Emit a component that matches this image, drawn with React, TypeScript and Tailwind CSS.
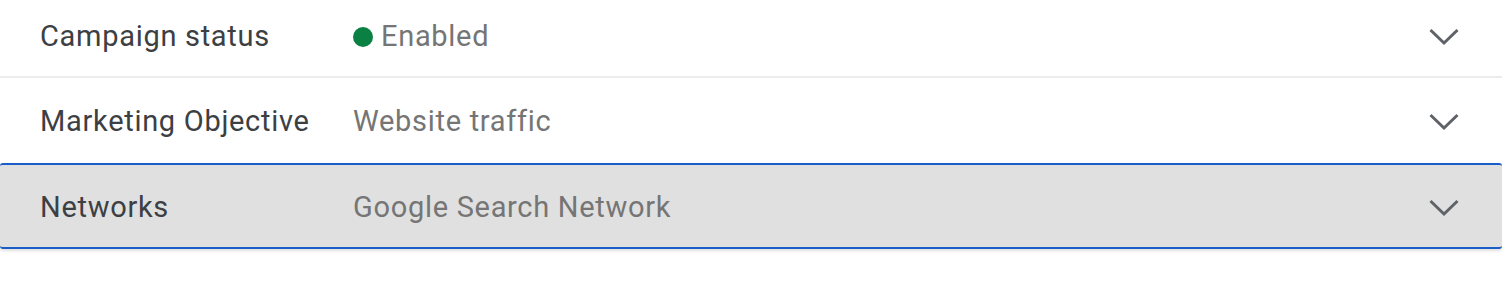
import React from 'react';

type Row = { label: string; value: string; status?: boolean; active?: boolean };

const rows: Row[] = [
  { label: 'Campaign status', value: 'Enabled', status: true },
  { label: 'Marketing Objective', value: 'Website traffic' },
  { label: 'Networks', value: 'Google Search Network', active: true },
];

function Chevron() {
  return (
    <svg width="30" height="18" viewBox="0 0 30 18" className="shrink-0">
      <polyline points="1.5,2 15,15 28.5,2" fill="none" stroke="#5f6368" strokeWidth="3" />
    </svg>
  );
}

function SettingRow({ row, first }: { row: Row; first: boolean }) {
  const base = 'flex items-center w-full pl-10 pr-[43px]';
  const cls = row.active
    ? `${base} h-[86px] pt-[3px] bg-[#e0e0e0] border-y-2 border-[#1a5dc9] rounded-[3px] shadow-[0_2px_3px_rgba(0,0,0,0.12)]`
    : first
      ? `${base} h-[78px] pb-[2px] border-b-2 border-[#ececec]`
      : `${base} h-[85px] pt-[2px]`;

  return (
    <div className={cls}>
      <div className="w-[313px] shrink-0 text-[#3c4043]">{row.label}</div>
      <div className="flex-1 flex items-center gap-2 text-[#757575]">
        {row.status && <span className="w-5 h-5 rounded-full bg-[#0b8043] inline-block" />}
        <span>{row.value}</span>
      </div>
      <Chevron />
    </div>
  );
}

export default function App() {
  return (
    <div
      className="w-[1502px] h-[282px] bg-white overflow-hidden text-[29px] tracking-[0.7px]"
      style={{ fontFamily: 'Roboto, "Open Sans", sans-serif' }}
    >
      {rows.map((r, i) => (
        <SettingRow key={r.label} row={r} first={i === 0} />
      ))}
    </div>
  );
}
